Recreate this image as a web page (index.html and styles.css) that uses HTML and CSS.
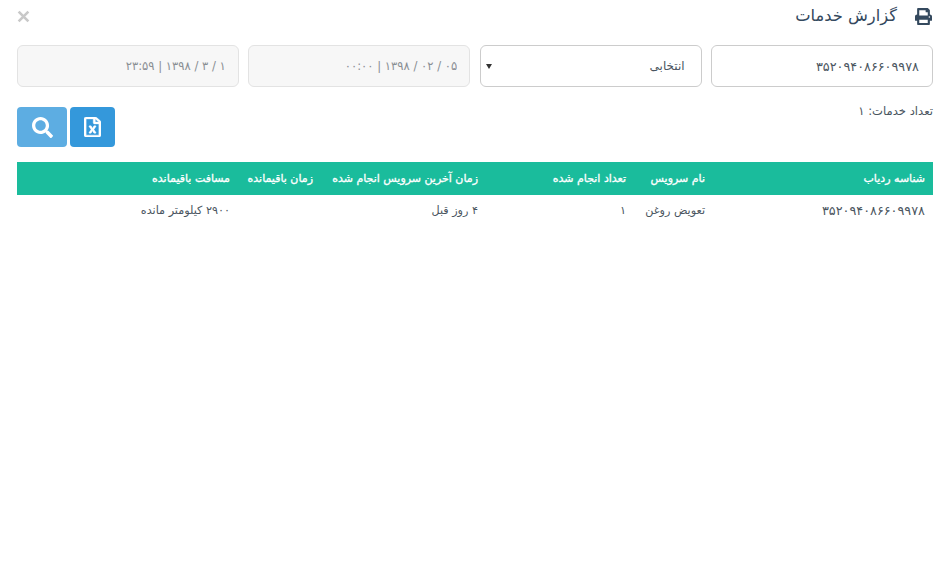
FILE: index.html
```html
<!DOCTYPE html>
<html lang="fa" dir="rtl">
<head>
  <meta charset="UTF-8" />
  <title>گزارش خدمات</title>
  <link rel="stylesheet" href="styles.css">
</head>
<body>
  <div class="modal" role="main">
    <div class="modal-head">
      <svg class="print-icon" viewBox="0 0 512 512" aria-hidden="true"><path d="M448 192V77.25c0-8.49-3.37-16.62-9.37-22.63L393.37 9.37c-6-6-14.14-9.37-22.63-9.37H96C78.33 0 64 14.33 64 32v160c-35.35 0-64 28.65-64 64v112c0 8.84 7.16 16 16 16h48v96c0 17.67 14.33 32 32 32h320c17.67 0 32-14.33 32-32v-96h48c8.84 0 16-7.16 16-16V256c0-35.35-28.65-64-64-64zm-64 256H128v-96h256v96zm0-224H128V64h192v48c0 8.84 7.16 16 16 16h48v96zm48 72c-13.25 0-24-10.75-24-24 0-13.26 10.75-24 24-24s24 10.74 24 24c0 13.25-10.75 24-24 24z"/></svg>
      <h1>گزارش خدمات</h1>
      <svg class="close-icon" viewBox="0 0 12 12" aria-label="بستن"><path d="M1.5 1.5l9 9M10.5 1.5l-9 9"/></svg>
    </div>

    <form class="filters">
      <input class="field field-id" type="text" value="۳۵۲۰۹۴۰۸۶۶۰۹۹۷۸">
      <select class="field field-select">
        <option>انتخابی</option>
      </select>
      <input class="field" type="text" value="۰۵ / ۰۲ / ۱۳۹۸ | ۰۰:۰۰" disabled>
      <input class="field" type="text" value="۱ / ۳ / ۱۳۹۸ | ۲۳:۵۹" disabled>
    </form>

    <div class="toolbar">
      <div class="count">تعداد خدمات: ۱</div>
      <div class="actions">
        <button type="button" class="btn btn-excel">
          <svg viewBox="0 0 384 512" preserveAspectRatio="none" aria-hidden="true"><path d="M369.9 97.9L286 14C277 5 264.8-.1 252.1-.1H48C21.5 0 0 21.5 0 48v416c0 26.5 21.5 48 48 48h288c26.5 0 48-21.5 48-48V131.9c0-12.7-5.1-25-14.1-34zM332.1 128H256V51.9l76.1 76.1zM48 464V48h160v104c0 13.3 10.7 24 24 24h104v288H48zm212-240h-28.8c-4.4 0-8.4 2.4-10.5 6.3-18 33.1-22.2 42.4-28.6 57.7-13.9-29.1-6.9-17.3-28.6-57.7-2.1-3.9-6.2-6.3-10.6-6.3H124c-9.3 0-15 10-10.4 18l46.3 78-46.3 78c-4.7 8 1.1 18 10.4 18h28.9c4.4 0 8.4-2.4 10.5-6.3 21.7-40 23-45 28.6-57.7 14.9 30.2 5.9 15.9 28.6 57.7 2.1 3.9 6.2 6.3 10.6 6.3H260c9.3 0 15-10 10.4-18L224 320c.7-1.1 30.3-50.5 46.3-78 4.7-8-1.1-18-10.3-18z"/></svg>
        </button>
        <button type="button" class="btn btn-search">
          <svg viewBox="0 0 512 512" aria-hidden="true"><path d="M505 442.7L405.3 343c-4.5-4.5-10.6-7-17-7H372c27.6-35.3 44-79.7 44-128C416 93.1 322.9 0 208 0S0 93.1 0 208s93.1 208 208 208c48.3 0 92.7-16.4 128-44v16.3c0 6.4 2.5 12.5 7 17l99.7 99.7c9.4 9.4 24.6 9.4 33.9 0l28.3-28.3c9.4-9.4 9.4-24.6.1-34zM208 336c-70.7 0-128-57.2-128-128 0-70.7 57.2-128 128-128 70.7 0 128 57.2 128 128 0 70.7-57.2 128-128 128z"/></svg>
        </button>
      </div>
    </div>

    <table class="report">
      <colgroup>
        <col class="col-id"><col class="col-name"><col class="col-done"><col class="col-last"><col class="col-time"><col class="col-dist">
      </colgroup>
      <thead>
        <tr>
          <th>شناسه ردیاب</th>
          <th>نام سرویس</th>
          <th>تعداد انجام شده</th>
          <th>زمان آخرین سرویس انجام شده</th>
          <th>زمان باقیمانده</th>
          <th>مسافت باقیمانده</th>
        </tr>
      </thead>
      <tbody>
        <tr>
          <td class="cell-id">۳۵۲۰۹۴۰۸۶۶۰۹۹۷۸</td>
          <td>تعویض روغن</td>
          <td>۱</td>
          <td>۴ روز قبل</td>
          <td></td>
          <td>۲۹۰۰ کیلومتر مانده</td>
        </tr>
      </tbody>
    </table>
  </div>
</body>
</html>
```

FILE: styles.css
```css
*, *::before, *::after { box-sizing: border-box; }
body {
  font-family: 'DejaVu Sans', 'Noto Sans', sans-serif;
  background: #fff;
  color: #4a5560;
  margin: 0;
}
.modal {
  padding: 0 14px 0 17px;
}
.modal-head {
  display: flex;
  align-items: center;
  height: 33px;
  padding-right: 1px;
}
.print-icon {
  width: 17px;
  height: 17px;
  fill: #34495e;
}
.modal-head h1 {
  margin: 0 18px 2px 0;
  font-size: 16.3px;
  font-weight: 400;
  color: #34495e;
}
.close-icon {
  width: 13px;
  height: 13px;
  margin-right: auto;
  fill: none;
  stroke: #c9c9c9;
  stroke-width: 2.4;
}
.filters {
  display: grid;
  grid-template-columns: repeat(4, 1fr);
  gap: 9.6px;
  margin-top: 12px;
}
.field {
  height: 42px;
  width: 100%;
  padding: 0 13px;
  border: 1px solid #ccc;
  border-radius: 6px;
  background: #fff;
  font-family: inherit;
  font-size: 12px;
  color: #4a5560;
}
.field-id {
  font-size: 12.8px;
}
.field-select {
  appearance: none;
  padding-right: 16px;
  background: url("data:image/svg+xml,%3Csvg xmlns='http://www.w3.org/2000/svg' width='6' height='5'%3E%3Cpath d='M0 0h6L3 5z' fill='%23333'/%3E%3C/svg%3E") no-repeat left 5px center;
}
.field:disabled {
  background: #f7f7f7;
  border-color: #e3e3e3;
  color: #8a8f94;
  font-size: 11.6px;
  padding: 0 12px;
}
.toolbar {
  display: flex;
  justify-content: space-between;
  margin-top: 20px;
}
.count {
  font-size: 11.6px;
  line-height: 8px;
}
.actions {
  display: flex;
  gap: 3px;
}
.btn {
  height: 40px;
  padding: 0;
  border: none;
  border-radius: 4px;
  display: flex;
  align-items: center;
  justify-content: center;
  cursor: pointer;
}
.btn svg {
  fill: #fff;
}
.btn-excel {
  width: 45px;
  background: #3498db;
}
.btn-excel svg {
  width: 17px;
  height: 20px;
  stroke: #fff;
  stroke-width: 10;
}
.btn-search {
  width: 50px;
  background: #5dade2;
}
.btn-search svg {
  width: 21px;
  height: 21px;
}
.report {
  width: 100%;
  margin-top: 15px;
  table-layout: fixed;
  border-collapse: collapse;
}
.col-id { width: 220px; }
.col-name { width: 79px; }
.col-done { width: 148px; }
.col-last { width: 165px; }
.col-time { width: 83px; }
.report th {
  height: 33px;
  padding: 0 8px;
  background: #1abc9c;
  color: #fff;
  font-size: 11px;
  font-weight: 400;
  -webkit-text-stroke: 0.3px #fff;
  text-align: right;
  white-space: nowrap;
}
.report td {
  height: 30px;
  padding: 0 8px;
  font-size: 11.2px;
  text-align: right;
  white-space: nowrap;
}
.report .cell-id {
  font-size: 12.8px;
}
```
